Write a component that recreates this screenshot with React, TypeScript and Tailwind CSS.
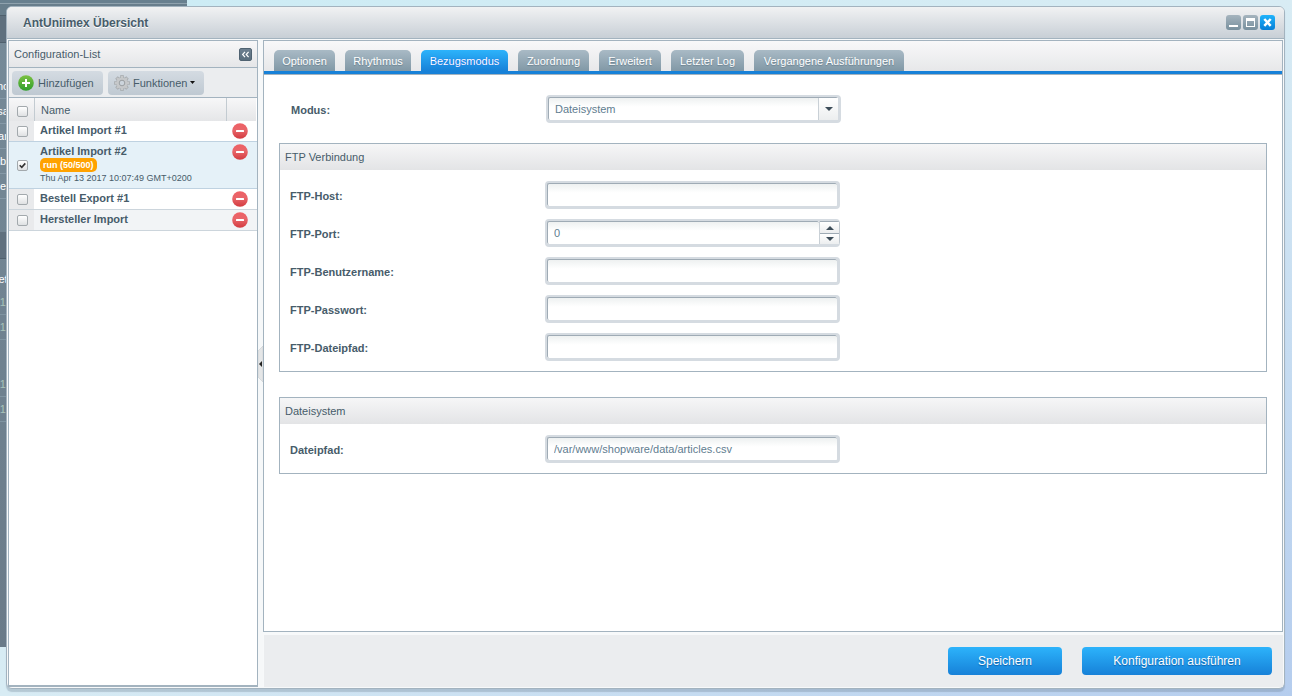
import { useState } from "react";
import type { ReactNode } from "react";
import clsx from "clsx";

type ConfigEntry = {
  id: number;
  name: string;
  status?: string;
  date?: string;
};

const ENTRIES: ConfigEntry[] = [
  { id: 1, name: "Artikel Import #1" },
  {
    id: 2,
    name: "Artikel Import #2",
    status: "run (50/500)",
    date: "Thu Apr 13 2017 10:07:49 GMT+0200",
  },
  { id: 3, name: "Bestell Export #1" },
  { id: 4, name: "Hersteller Import" },
];

const TABS = [
  { name: "Optionen", width: "w-[61px]" },
  { name: "Rhythmus", width: "w-[66px]" },
  { name: "Bezugsmodus", width: "w-[87px]" },
  { name: "Zuordnung", width: "w-[71px]" },
  { name: "Erweitert", width: "w-[62px]" },
  { name: "Letzter Log", width: "w-[73px]" },
  { name: "Vergangene Ausführungen", width: "w-[150px]" },
];

const CHECKBOX =
  "block h-[11px] w-[11px] appearance-none rounded-[2px] border border-[#a3a9ad] bg-linear-to-b from-white to-[#dfe1e3]";

const BLUE_BUTTON =
  "h-7 rounded-[4px] bg-linear-to-b from-[#2db3fb] to-[#1781d8] text-xs text-white text-shadow-[0_1px_1px_#0e5fa8]";

const FIELD_FRAME =
  "flex h-7 w-[295px] rounded-[4px] border-t-2 border-r-[3px] border-b-[3px] border-l-2 border-[#d5dbe1]";

const FIELD_INPUT =
  "h-full w-full min-w-0 flex-1 appearance-none rounded-[2px] border-t border-l border-[#9fabb5] bg-linear-to-b from-[#eef1f1] to-white to-40% px-[6px] pb-px text-[#5f7d90] outline-none";

function Check({ label, checked = false }: { label: string; checked?: boolean }) {
  const [on, setOn] = useState(checked);
  return (
    <span className="relative block w-[11px]">
      <input
        type="checkbox"
        aria-label={label}
        checked={on}
        onChange={(e) => setOn(e.target.checked)}
        className={CHECKBOX}
      />
      {on && (
        <svg viewBox="0 0 11 11" className="pointer-events-none absolute inset-0 h-[11px] w-[11px]">
          <path d="M2.7 5.2L4.8 7.4L8.3 3.4" fill="none" stroke="#333" strokeWidth="1.6" />
        </svg>
      )}
    </span>
  );
}

function DeleteIcon() {
  return (
    <svg viewBox="0 0 16 16" className="h-4 w-4">
      <defs>
        <linearGradient id="del" x1="0" y1="0" x2="0" y2="1">
          <stop offset="0" stopColor="#ee6065" />
          <stop offset="0.45" stopColor="#e8666a" />
          <stop offset="1" stopColor="#d33a3f" />
        </linearGradient>
      </defs>
      <circle cx="8" cy="8" r="7.8" fill="url(#del)" />
      <rect x="4" y="7" width="8" height="2" rx="0.5" fill="#fff" />
    </svg>
  );
}

function AddIcon() {
  return (
    <svg viewBox="0 0 16 16" className="h-4 w-4">
      <defs>
        <linearGradient id="add" x1="0" y1="0" x2="0" y2="1">
          <stop offset="0" stopColor="#7cc142" />
          <stop offset="1" stopColor="#2f9e2c" />
        </linearGradient>
      </defs>
      <circle cx="8" cy="8" r="7.8" fill="url(#add)" />
      <path d="M8 4V12M4 8H12" stroke="#fff" strokeWidth="2" />
    </svg>
  );
}

function GearIcon() {
  return (
    <svg viewBox="0 0 16 16" className="h-4 w-4">
      <g stroke="#a4a8ab" strokeWidth="3.6">
        <path d="M8 0.2V15.8M0.2 8H15.8M2.5 2.5L13.5 13.5M13.5 2.5L2.5 13.5" />
      </g>
      <circle cx="8" cy="8" r="6" fill="#a4a8ab" />
      <g stroke="#c6c8ca" strokeWidth="2.4">
        <path d="M8 0.9V15.1M0.9 8H15.1M3 3L13 13M13 3L3 13" />
      </g>
      <circle cx="8" cy="8" r="5.6" fill="#c6c8ca" />
      <circle cx="8" cy="8" r="2.8" fill="#ccd4dc" stroke="#9b9fa2" strokeWidth="1" />
    </svg>
  );
}

/* The shop backend window that lies behind the dialog */
function BackgroundWindow() {
  const line = "flex h-[25px] items-center justify-center border-b border-[#869aa8] text-white";
  const faded = "flex h-[25px] items-center justify-end border-b border-[#8095a2] text-[#a9c4ba]";
  return (
    <div
      aria-hidden="true"
      className="absolute top-0 left-0 h-[647px] w-[187px] bg-linear-to-b from-[#768b99] to-[#6a7b89]"
    >
      <div className="h-[4px] border-b border-[#8fa2ae] bg-[#68808f]" />
      <div className="h-[11px] bg-[#687e8c]" />
      <div className="h-[28px] border-y border-[#4f606d] bg-[#5f707e]" />
      <div className="w-[6px] overflow-hidden pt-[31px] whitespace-nowrap">
        <div className={line}>no</div>
        <div className={line}>sa</div>
        <div className={line}>ar</div>
        <div className={line}>b</div>
        <div className={line}>e</div>
        <div className="mt-[33px] h-[27px] border-b border-[#4f606d] bg-[#5f707e]" />
        <div className="flex h-[31px] items-end justify-center pb-[4px] text-white">et</div>
        <div className={faded}>01</div>
        <div className={faded}>01</div>
        <div className="h-[32px]" />
        <div className={faded}>01</div>
        <div className={faded}>01</div>
      </div>
    </div>
  );
}

function TitleBar() {
  return (
    <header className="flex h-8 shrink-0 items-center rounded-t-[5px] border-b border-[#a3b3bf] bg-linear-to-b from-[#f1f2f3] to-[#c8cfd6] pr-[9px] pl-4">
      <h1 className="flex-1 text-xs font-bold text-shadow-[0_1px_0_#fff]">AntUniimex Übersicht</h1>
      <div className="flex gap-[2px]">
        <button aria-label="Minimieren" className="rounded-[3px] bg-linear-to-b from-[#a5b4be] to-[#78909e]">
          <svg viewBox="0 0 15 15" className="h-[15px] w-[15px]">
            <rect x="3" y="10" width="9" height="2" fill="#fff" />
          </svg>
        </button>
        <button aria-label="Maximieren" className="rounded-[3px] bg-linear-to-b from-[#a5b4be] to-[#78909e]">
          <svg viewBox="0 0 15 15" className="h-[15px] w-[15px]">
            <path d="M3 3H12V12H3ZM4 6V11H11V6Z" fill="#fff" fillRule="evenodd" />
          </svg>
        </button>
        <button aria-label="Schließen" className="rounded-[3px] bg-linear-to-b from-[#1fb3fb] to-[#067ed6]">
          <svg viewBox="0 0 15 15" className="h-[15px] w-[15px]">
            <path d="M4.3 4L10.7 10.8M10.7 4L4.3 10.8" stroke="#fff" strokeWidth="2.5" />
          </svg>
        </button>
      </div>
    </header>
  );
}

function ConfigurationList() {
  return (
    <aside className="flex w-[250px] shrink-0 flex-col border border-b-2 border-[#a3b3bf] bg-white">
      <div className="flex h-[27px] items-center justify-between border-b border-[#a3b3bf] bg-linear-to-b from-[#f7f7f8] to-[#e5e6e8] px-[5px]">
        <h2>Configuration-List</h2>
        <button
          aria-label="Liste einklappen"
          className="rounded-[2px] border border-[#4f6271] bg-linear-to-b from-[#6d8090] to-[#5a6e7d]"
        >
          <svg viewBox="0 0 11 11" className="h-[11px] w-[11px]">
            <path d="M5 2.8L2.6 5.5L5 8.2M8.6 2.8L6.2 5.5L8.6 8.2" fill="none" stroke="#fff" strokeWidth="1.2" />
          </svg>
        </button>
      </div>

      <div className="flex h-[30px] items-center gap-[5px] border-b border-[#a3b3bf] bg-[#ebedef] px-[3px]">
        <button className="flex h-6 w-[91px] items-center gap-1 rounded-[4px] bg-linear-to-b from-[#d4dbe2] to-[#bfc9d2] pl-[6px] whitespace-nowrap">
          <AddIcon />
          Hinzufügen
        </button>
        <button className="flex h-6 w-24 items-center gap-[3px] rounded-[4px] bg-linear-to-b from-[#d4dbe2] to-[#bfc9d2] pl-[6px] whitespace-nowrap">
          <GearIcon />
          Funktionen
          <svg viewBox="0 0 5 3" className="h-[3px] w-[5px]">
            <path d="M0 0H5L2.5 3Z" fill="#111" />
          </svg>
        </button>
      </div>

      <table className="w-full table-fixed border-separate border-spacing-0 text-left">
        <colgroup>
          <col className="w-[25px]" />
          <col />
          <col className="w-[30px]" />
        </colgroup>
        <thead>
          <tr className="h-[23px] bg-linear-to-b from-[#f7f7f8] to-[#e5e6e8]">
            <th className="pt-[3px] pl-2">
              <Check label="Alle auswählen" />
            </th>
            <th className="border-x border-[#c3cbd1] px-[6px] font-normal">Name</th>
            <th className="border-r border-white" />
          </tr>
        </thead>
        <tbody>
          {ENTRIES.map((entry, i) => {
            const selected = Boolean(entry.status);
            const line = selected || i === 0 ? "border-b border-[#bfd2e1]" : "border-b border-[#ccd5dc]";
            return (
              <tr
                key={entry.id}
                className={clsx(
                  selected ? "h-[47px] bg-[#e5f1f8]" : "h-[21px]",
                  i === 3 && "bg-[#f2f4f6]",
                )}
              >
                <td className={clsx(line, "pl-2", !selected && "bg-[#e9eaec]")}>
                  <Check label={`${entry.name} auswählen`} checked={selected} />
                </td>
                <td className={clsx(line, "px-[6px] pt-[2px] align-top whitespace-nowrap")}>
                  <div className="leading-[14px] font-bold">{entry.name}</div>
                  {entry.status && (
                    <div className="flex">
                      <span className="rounded-[5px] bg-[#ffa200] px-[3px] text-[9px] leading-[14px] font-bold text-white">
                        {entry.status}
                      </span>
                    </div>
                  )}
                  {entry.date && <div className="text-[9px] leading-[13px]">{entry.date}</div>}
                </td>
                <td className={clsx(line, "pt-[2px] pl-[5px] align-top")}>
                  <button aria-label={`${entry.name} löschen`} className="block">
                    <DeleteIcon />
                  </button>
                </td>
              </tr>
            );
          })}
        </tbody>
      </table>
    </aside>
  );
}

function Splitter() {
  return (
    <div className="flex w-[5px] shrink-0 items-center bg-[#f6f8f9]">
      <button aria-label="Bereich einklappen">
        <svg viewBox="0 0 5 36" className="h-9 w-[5px]">
          <path d="M5 0L0 5V31L5 36Z" fill="#e4e6e7" stroke="#c9cdd0" strokeWidth="0.6" />
          <path d="M4 15V21L1 18Z" fill="#222" />
        </svg>
      </button>
    </div>
  );
}

function FieldRow({ id, label, children }: { id: string; label: string; children: ReactNode }) {
  return (
    <div className="flex h-7 items-center">
      <label htmlFor={id} className="w-[255px] shrink-0 pt-[2px] font-bold">
        {label}
      </label>
      {children}
    </div>
  );
}

function TextField({
  id,
  label,
  type = "text",
  value,
}: {
  id: string;
  label: string;
  type?: string;
  value?: string;
}) {
  return (
    <FieldRow id={id} label={label}>
      <div className={FIELD_FRAME}>
        <input id={id} type={type} defaultValue={value} className={FIELD_INPUT} />
      </div>
    </FieldRow>
  );
}

function NumberField({ id, label }: { id: string; label: string }) {
  const [port, setPort] = useState(0);
  const step = "flex h-[11px] w-[19px] items-center justify-center bg-linear-to-b from-white to-[#eceeef]";
  return (
    <FieldRow id={id} label={label}>
      <div className={FIELD_FRAME}>
        <input
          id={id}
          inputMode="numeric"
          value={port}
          onChange={(e) => setPort(Number(e.target.value) || 0)}
          className={FIELD_INPUT}
        />
        <div className="-mr-[3px] flex flex-col rounded-r-[3px] border-t border-r border-l border-t-[#9fabb5] border-r-[#c0c8cf] border-l-[#c9d0d6]">
          <button type="button" aria-label="Port erhöhen" className={step} onClick={() => setPort(port + 1)}>
            <svg viewBox="0 0 8 4" className="h-1 w-2">
              <path d="M0 4L4 0L8 4Z" fill="#3d4d59" />
            </svg>
          </button>
          <button
            type="button"
            aria-label="Port verringern"
            className={clsx(step, "border-t border-[#9fabb5]")}
            onClick={() => setPort(Math.max(0, port - 1))}
          >
            <svg viewBox="0 0 8 4" className="h-1 w-2">
              <path d="M0 0L4 4L8 0Z" fill="#3d4d59" />
            </svg>
          </button>
        </div>
      </div>
    </FieldRow>
  );
}

function Group({ title, children }: { title: string; children: ReactNode }) {
  return (
    <section className="border border-[#a3b3bf] bg-white">
      <h3 className="flex h-[27px] items-center border-b border-white bg-linear-to-b from-[#f6f6f7] to-[#e3e4e6] px-[5px]">
        {title}
      </h3>
      <div className="flex flex-col gap-[10px] p-[10px]">{children}</div>
    </section>
  );
}

export default function App() {
  const [tab, setTab] = useState("Bezugsmodus");

  return (
    <div className="relative flex min-h-screen bg-linear-to-br from-[#cbecf5] via-[#d8ecf4] to-[#b5cdee] pt-[6px] pr-[7px] pb-[7px] pl-[6px] font-['Liberation_Sans',Arial,sans-serif] text-[11px] leading-[14px] text-[#475c6a]">
      <BackgroundWindow />

      <div className="relative flex min-w-0 flex-1 flex-col rounded-[6px] border border-[#a3b3bf] bg-[#f7f9fa] shadow-[0_3px_1px_rgba(100,120,140,0.3)]">
        <TitleBar />

        <div className="flex flex-1 p-px">
          <ConfigurationList />
          <Splitter />

          <div className="flex min-w-0 flex-1 flex-col gap-[3px]">
            <main className="flex flex-1 flex-col border border-[#a3b3bf] bg-white">
              <div
                role="tablist"
                className="flex h-[34px] items-end gap-[10px] border-b border-[#a3b3bf] bg-linear-to-b from-[#f8f8f9] to-[#e5e6e8] pl-[10px] shadow-[inset_0_-3px_0_#1781d8]"
              >
                {TABS.map(({ name, width }) => (
                  <button
                    key={name}
                    role="tab"
                    aria-selected={tab === name}
                    onClick={() => setTab(name)}
                    className={clsx(
                      "mb-[3px] h-[21px] rounded-t-[5px] bg-linear-to-b text-center whitespace-nowrap text-white",
                      width,
                      tab === name
                        ? "from-[#2db3fb] to-[#1781d8] text-shadow-[0_0_1px_#0a4fe0]"
                        : "from-[#a9bac5] to-[#8198a6] text-shadow-[0_1px_1px_#6b8190]",
                    )}
                  >
                    {name}
                  </button>
                ))}
              </div>

              <form className="flex flex-col px-[15px] pt-5" onSubmit={(e) => e.preventDefault()}>
                <div className="mb-5 pl-3">
                  <FieldRow id="modus" label="Modus:">
                    <div className={clsx(FIELD_FRAME, "relative")}>
                      <select id="modus" className={clsx(FIELD_INPUT, "pr-6")}>
                        <option>Dateisystem</option>
                        <option>FTP</option>
                      </select>
                      <span className="pointer-events-none absolute top-px right-0 bottom-0 flex w-5 items-center justify-center border-l border-[#c9d0d6] bg-linear-to-b from-white to-[#eceeef]">
                        <svg viewBox="0 0 8 4" className="h-1 w-2">
                          <path d="M0 0L4 4L8 0Z" fill="#3d4d59" />
                        </svg>
                      </span>
                    </div>
                  </FieldRow>
                </div>

                <div className="flex flex-col gap-[25px]">
                  <Group title="FTP Verbindung">
                    <TextField id="ftp-host" label="FTP-Host:" />
                    <NumberField id="ftp-port" label="FTP-Port:" />
                    <TextField id="ftp-user" label="FTP-Benutzername:" />
                    <TextField id="ftp-password" label="FTP-Passwort:" type="password" />
                    <TextField id="ftp-path" label="FTP-Dateipfad:" />
                  </Group>
                  <Group title="Dateisystem">
                    <TextField id="path" label="Dateipfad:" value="/var/www/shopware/data/articles.csv" />
                  </Group>
                </div>
              </form>
            </main>

            <footer className="ml-px flex h-[52px] shrink-0 items-center justify-end gap-5 bg-[#ebedef] pr-[11px]">
              <button className={clsx(BLUE_BUTTON, "w-[114px]")}>Speichern</button>
              <button className={clsx(BLUE_BUTTON, "w-[190px]")}>Konfiguration ausführen</button>
            </footer>
          </div>
        </div>
      </div>
    </div>
  );
}
